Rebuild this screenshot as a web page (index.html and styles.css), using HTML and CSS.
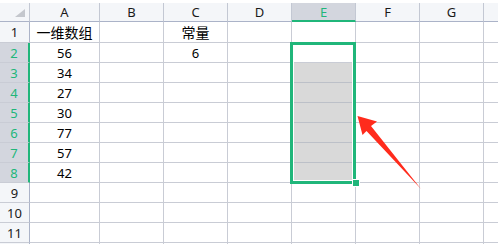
FILE: index.html
```html
<!DOCTYPE html>
<html lang="zh">
<head>
<meta charset="utf-8">
<link rel="stylesheet" href="styles.css">
</head>
<body>
<div class="page">
  <div class="sheet">
    <div class="cell corner"><span class="tri"></span></div>
    <div class="cell ch">A</div>
    <div class="cell ch">B</div>
    <div class="cell ch">C</div>
    <div class="cell ch">D</div>
    <div class="cell ch ch-on">E</div>
    <div class="cell ch">F</div>
    <div class="cell ch">G</div>
    <div class="cell ch"></div>

    <div class="cell rh">1</div>
    <div class="cell d cjk">一维数组</div><div class="cell d"></div><div class="cell d cjk">常量</div><div class="cell d"></div><div class="cell d"></div><div class="cell d"></div><div class="cell d"></div><div class="cell d"></div>

    <div class="cell rh rh-on">2</div>
    <div class="cell d">56</div><div class="cell d"></div><div class="cell d">6</div><div class="cell d"></div><div class="cell d"></div><div class="cell d"></div><div class="cell d"></div><div class="cell d"></div>

    <div class="cell rh rh-on">3</div>
    <div class="cell d">34</div><div class="cell d"></div><div class="cell d"></div><div class="cell d"></div><div class="cell d sel"></div><div class="cell d"></div><div class="cell d"></div><div class="cell d"></div>

    <div class="cell rh rh-on">4</div>
    <div class="cell d">27</div><div class="cell d"></div><div class="cell d"></div><div class="cell d"></div><div class="cell d sel"></div><div class="cell d"></div><div class="cell d"></div><div class="cell d"></div>

    <div class="cell rh rh-on">5</div>
    <div class="cell d">30</div><div class="cell d"></div><div class="cell d"></div><div class="cell d"></div><div class="cell d sel"></div><div class="cell d"></div><div class="cell d"></div><div class="cell d"></div>

    <div class="cell rh rh-on">6</div>
    <div class="cell d">77</div><div class="cell d"></div><div class="cell d"></div><div class="cell d"></div><div class="cell d sel"></div><div class="cell d"></div><div class="cell d"></div><div class="cell d"></div>

    <div class="cell rh rh-on">7</div>
    <div class="cell d">57</div><div class="cell d"></div><div class="cell d"></div><div class="cell d"></div><div class="cell d sel"></div><div class="cell d"></div><div class="cell d"></div><div class="cell d"></div>

    <div class="cell rh rh-on">8</div>
    <div class="cell d">42</div><div class="cell d"></div><div class="cell d"></div><div class="cell d"></div><div class="cell d sel"></div><div class="cell d"></div><div class="cell d"></div><div class="cell d"></div>

    <div class="cell rh">9</div>
    <div class="cell d"></div><div class="cell d"></div><div class="cell d"></div><div class="cell d"></div><div class="cell d"></div><div class="cell d"></div><div class="cell d"></div><div class="cell d"></div>

    <div class="cell rh">10</div>
    <div class="cell d"></div><div class="cell d"></div><div class="cell d"></div><div class="cell d"></div><div class="cell d"></div><div class="cell d"></div><div class="cell d"></div><div class="cell d"></div>

    <div class="cell rh">11</div>
    <div class="cell d"></div><div class="cell d"></div><div class="cell d"></div><div class="cell d"></div><div class="cell d"></div><div class="cell d"></div><div class="cell d"></div><div class="cell d"></div>

    <div class="cell rh"></div>
    <div class="cell d"></div><div class="cell d"></div><div class="cell d"></div><div class="cell d"></div><div class="cell d"></div><div class="cell d"></div><div class="cell d"></div><div class="cell d"></div>
  </div>

  <div class="selection"></div>
  <div class="handle"></div>

  <svg class="arrow" width="498" height="244" viewBox="0 0 498 244">
    <polygon points="357.5,116 377,121.5 371,126 421,189 366.5,131 362.5,135" fill="#ff2b1c"/>
  </svg>
</div>
</body>
</html>
```

FILE: styles.css
```css
html, body {
  margin: 0;
  padding: 0;
  background: #ffffff;
}

body {
  width: 498px;
  height: 244px;
  overflow: hidden;
  font-family: "Noto Sans", "Noto Sans CJK SC", sans-serif;
}

.page {
  position: relative;
  width: 498px;
  height: 244px;
  padding-top: 3px;
  box-sizing: border-box;
  overflow: hidden;
}

.sheet {
  display: grid;
  grid-template-columns: 30px 70px 64px 64px 64px 64px 64px 64px 30px;
  grid-template-rows: 19px 21px repeat(11, 20px);
}

.cell {
  box-sizing: border-box;
  border-right: 1px solid #c9ccd5;
  border-bottom: 1px solid #c9ccd5;
  display: flex;
  align-items: center;
  justify-content: center;
  font-size: 13px;
  color: #000;
  white-space: nowrap;
  overflow: hidden;
}

.corner {
  background: #f4f6f9;
  border-right-color: #c3c8d3;
  border-bottom-color: #abb3c8;
  position: relative;
}

.tri {
  position: absolute;
  left: 15px;
  top: 6px;
  width: 0;
  height: 0;
  border-left: 10px solid transparent;
  border-bottom: 8px solid #c4c7cd;
}

.ch {
  background: #f4f6f9;
  border-right-color: #c3c8d3;
  border-bottom-color: #abb3c8;
  color: #1a1a1a;
  font-size: 13px;
}

.ch-on {
  background: #d3d6de;
  color: #20b67a;
  border-bottom: 2px solid #20b67a;
}

.rh {
  background: #f4f6f9;
  border-right-color: #abb3c8;
  border-bottom-color: #c9ccd5;
  color: #1a1a1a;
  font-size: 13px;
}

.rh-on {
  background: #d3d6de;
  color: #20b67a;
  border-right: 2px solid #20b67a;
}

.cjk {
  font-family: "Noto Sans CJK SC", sans-serif;
  font-size: 14px;
}

.sel {
  background: #d9d9d9;
  border-bottom-color: #bcc0c8;
}

.selection {
  position: absolute;
  left: 290px;
  top: 42px;
  width: 66px;
  height: 142px;
  box-sizing: border-box;
  border: 3px solid #20b67a;
  box-shadow: inset 0 0 0 1px #ffffff;
}

.handle {
  position: absolute;
  left: 352px;
  top: 179px;
  width: 8px;
  height: 8px;
  box-sizing: border-box;
  background: #20b67a;
  border: 1px solid #ffffff;
}

.arrow {
  position: absolute;
  left: 0;
  top: 0;
}
```
